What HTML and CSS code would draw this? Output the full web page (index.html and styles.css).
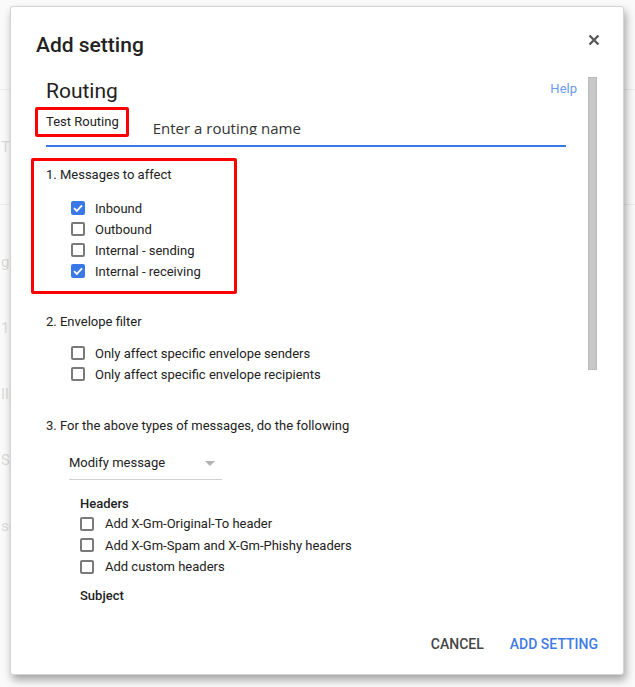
FILE: index.html
```html
<!DOCTYPE html>
<html lang="en">
<head>
  <meta charset="UTF-8" />
  <title>Add setting</title>
  <link rel="stylesheet" href="styles.css">
</head>
<body>

  <div class="page">
    <div class="page-row page-line"></div>
    <div class="page-row">Tls</div>
    <div class="page-row page-line"></div>
    <div class="page-row">gmail</div>
    <div class="page-row">1:</div>
    <div class="page-row">Ilp</div>
    <div class="page-row">Ssl</div>
    <div class="page-row">se</div>
  </div>

  <div class="dialog">
    <div class="dialog-head">
      <h2 class="dialog-title">Add setting</h2>
      <button class="close">
        <svg width="12" height="12" viewBox="0 0 12 12"><path d="M1.5 1.5L10.5 10.5M10.5 1.5L1.5 10.5" stroke="#5a5a5a" stroke-width="2.4"/></svg>
      </button>
    </div>

    <div class="dialog-body">
      <div class="content">
        <div class="routing-row">
          <h3>Routing</h3>
          <a class="help" href="#">Help</a>
        </div>

        <div class="name-row">
          <div class="mark name-mark">Test Routing</div>
          <div class="name-input">Enter a routing name</div>
        </div>
        <div class="name-line"></div>

        <div class="mark affect">
          <div class="step">1. Messages to affect</div>
          <div class="checks">
            <label class="check"><span class="cb on"><svg width="10" height="10" viewBox="0 0 10 10"><path d="M1 5.2L3.8 8L9 2.3" stroke="#fff" stroke-width="1.8" fill="none"/></svg></span>Inbound</label>
            <label class="check"><span class="cb"></span>Outbound</label>
            <label class="check"><span class="cb"></span>Internal - sending</label>
            <label class="check"><span class="cb on"><svg width="10" height="10" viewBox="0 0 10 10"><path d="M1 5.2L3.8 8L9 2.3" stroke="#fff" stroke-width="1.8" fill="none"/></svg></span>Internal - receiving</label>
          </div>
        </div>

        <div class="step step-2">2. Envelope filter</div>
        <div class="checks checks-2">
          <label class="check"><span class="cb"></span>Only affect specific envelope senders</label>
          <label class="check"><span class="cb"></span>Only affect specific envelope recipients</label>
        </div>

        <div class="step step-3">3. For the above types of messages, do the following</div>
        <div class="select">Modify message<span class="caret"></span></div>

        <div class="group">
          <div class="group-title">Headers</div>
          <label class="check"><span class="cb"></span>Add X-Gm-Original-To header</label>
          <label class="check"><span class="cb"></span>Add X-Gm-Spam and X-Gm-Phishy headers</label>
          <label class="check"><span class="cb"></span>Add custom headers</label>
          <div class="group-title subject">Subject</div>
        </div>
      </div>
      <div class="scrollbar"><div class="thumb"></div></div>
    </div>

    <div class="dialog-foot">
      <button class="btn">Cancel</button>
      <button class="btn btn-primary">Add setting</button>
    </div>
  </div>

</body>
</html>
```

FILE: styles.css
```css
body {
  margin: 0;
  font-family: Roboto, "Liberation Sans", sans-serif;
  background-color: #fafafa;
  color: #222;
}

/* faint page behind the dialog */
.page {
  padding-top: 89px;
}

.page-row {
  height: 66px;
  padding-left: 1px;
  font-size: 15px;
  color: #dadada;
}

.page-line {
  height: 0;
  border-top: 1px solid #ededed;
  margin-bottom: 48px;
}

.dialog {
  position: absolute;
  top: 6px;
  left: 10px;
  width: 614px;
  height: 669px;
  box-sizing: border-box;
  border: 1px solid #d4d4d4;
  border-radius: 3px;
  background: #fff;
  box-shadow: 2px 5px 8px rgba(0, 0, 0, 0.35);
  display: flex;
  flex-direction: column;
}

.dialog-head {
  height: 70px;
  box-sizing: border-box;
  padding: 24px 23px 0 25px;
  display: flex;
  justify-content: space-between;
  align-items: flex-start;
}

.dialog-title {
  margin: 0;
  font-size: 21px;
  line-height: 28px;
  font-weight: 500;
}

.close {
  border: none;
  background: none;
  padding: 0;
  margin-top: 3px;
  width: 12px;
  height: 12px;
  display: block;
  cursor: pointer;
}

.close svg {
  display: block;
}

.dialog-body {
  height: 537px;
  display: flex;
  overflow: hidden;
}

.content {
  flex: 1;
  padding: 2px 11px 0 35px;
  overflow: hidden;
}

.scrollbar {
  width: 9px;
  margin-right: 26px;
}

.thumb {
  height: 293px;
  background: #c8c8c8;
  border: 1px solid #bababa;
  box-sizing: border-box;
}

.routing-row {
  display: flex;
  justify-content: space-between;
  align-items: flex-start;
}

.routing-row h3 {
  margin: 0;
  font-size: 21px;
  line-height: 24px;
  font-weight: 400;
}

.help {
  font-size: 13px;
  line-height: 20px;
  color: #6a9cf2;
  text-decoration: none;
}

.name-row {
  display: flex;
  align-items: flex-start;
  margin-top: 4px;
}

.mark {
  border: 3px solid #f00;
  border-radius: 2px;
}

.name-mark {
  margin-left: -11px;
  padding: 0 7px 0 8px;
  height: 30px;
  box-sizing: border-box;
  font-size: 13px;
  line-height: 24px;
}

.name-input {
  margin: 11px 0 0 24px;
  height: 17px;
  overflow: hidden;
  font-family: "Open Sans", sans-serif;
  font-size: 15px;
  line-height: 20px;
  color: #333;
}

.name-line {
  height: 2px;
  background: #3b78e7;
  margin: 8px 11px 0 0;
}

.affect {
  margin: 11px 0 0 -15px;
  width: 206px;
  box-sizing: border-box;
  padding: 4px 0 9px 12px;
}

.step {
  font-size: 13px;
  line-height: 20px;
}

.checks {
  margin: 13px 0 0 25px;
}

.checks-2 {
  margin-top: 11px;
}

.check {
  display: flex;
  align-items: center;
  gap: 10px;
  font-size: 13px;
  line-height: 21px;
}

.cb {
  width: 14px;
  height: 14px;
  box-sizing: border-box;
  border: 2px solid #7a7a7a;
  border-radius: 2px;
  flex: none;
  margin-top: -2px;
  display: flex;
  align-items: center;
  justify-content: center;
}

.cb.on {
  background: #3b78e7;
  border-color: #3b78e7;
}

.step-2 {
  margin-top: 18px;
}

.step-3 {
  margin-top: 31px;
}

.select {
  margin: 17px 0 0 23px;
  width: 153px;
  box-sizing: border-box;
  padding-bottom: 6px;
  border-bottom: 1px solid #d0d0d0;
  font-size: 13px;
  line-height: 20px;
  display: flex;
  justify-content: space-between;
  align-items: center;
}

.caret {
  width: 0;
  height: 0;
  border-left: 5px solid transparent;
  border-right: 5px solid transparent;
  border-top: 5px solid #b3b3b3;
  margin-right: 7px;
}

.group {
  margin: 14px 0 0 34px;
}

.group-title {
  font-weight: 500;
  font-size: 13px;
  line-height: 19px;
}

.group .check {
  line-height: 21.5px;
  gap: 11px;
}

.group .cb {
  margin-top: 0;
}

.subject {
  margin-top: 8px;
}

.dialog-foot {
  flex: 1;
  display: flex;
  justify-content: flex-end;
  align-items: center;
  gap: 26px;
  padding-right: 25px;
}

.btn {
  border: none;
  background: none;
  padding: 0;
  font-family: Roboto, "Liberation Sans", sans-serif;
  font-size: 14px;
  font-weight: 500;
  text-transform: uppercase;
  color: #444;
  cursor: pointer;
}

.btn-primary {
  color: #3f7be6;
}
```
